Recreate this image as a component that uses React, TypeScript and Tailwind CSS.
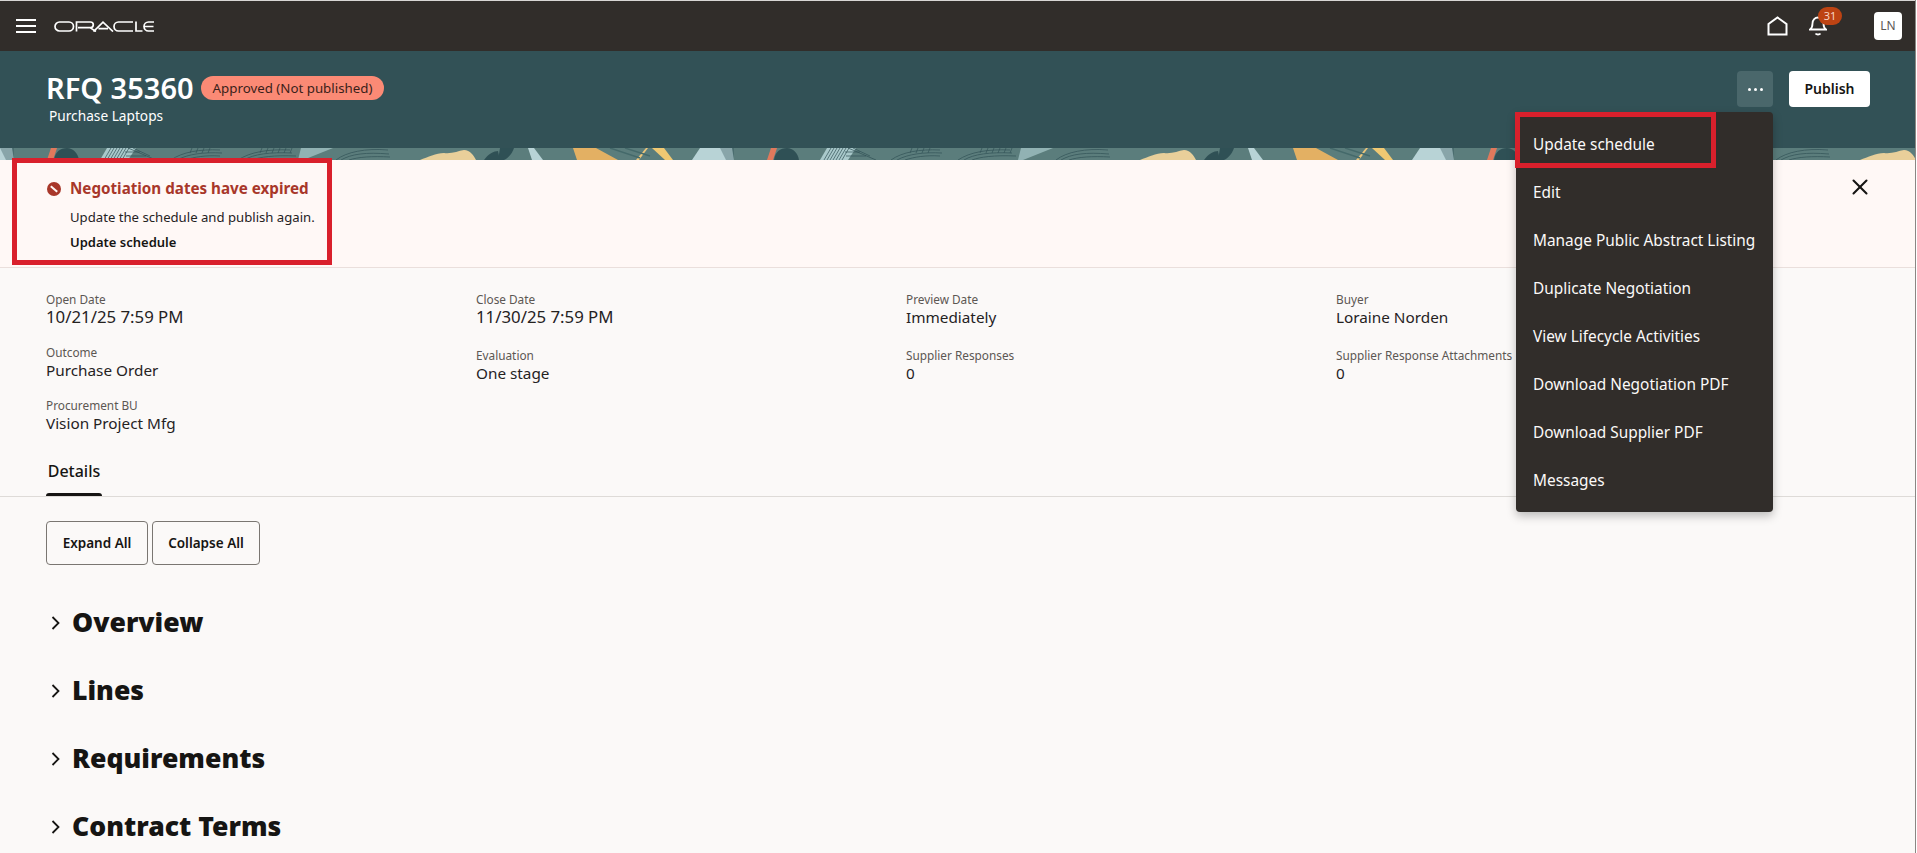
import { X } from "lucide-react";

const menuItems = [
	"Update schedule",
	"Edit",
	"Manage Public Abstract Listing",
	"Duplicate Negotiation",
	"View Lifecycle Activities",
	"Download Negotiation PDF",
	"Download Supplier PDF",
	"Messages",
];

const sections = ["Overview", "Lines", "Requirements", "Contract Terms"];

const Field = ({ label, value, date }: { label: string; value: string; date?: boolean }) => (
	<div className="flex flex-col whitespace-nowrap">
		<span className="text-[11.8px] leading-[15px] text-[#5c5753]">{label}</span>
		<span className={`leading-[20px] text-[#25221f] ${date ? "text-[16.8px]" : "text-[15.3px]"}`}>{value}</span>
	</div>
);

const OracleLogo = () => (
	<svg width="100" height="11" viewBox="0 0 100 11" fill="none" stroke="#fff" strokeWidth="1.7" role="img" aria-label="Oracle">
		<rect x="1" y="1" width="18.5" height="9" rx="4.5" />
		<path d="M22.5 10.5V1H36.5a2.7 2.7 0 0 1 0 5.6H24M36 6.6L42 10.5" />
		<path d="M39.5 10.5L49 1.2L59 10.5M44.5 7.6H54" />
		<path d="M79 1H64.5a4.5 4.5 0 0 0 0 9H79" />
		<path d="M82 0.5V10H88.5" />
		<path d="M100 1H94.5a4.5 4.5 0 0 0 0 9H100M90.5 5.5H99.5" />
	</svg>
);

// 720px wide tile, repeats along the strip under the page header
const PatternStrip = () => (
	<svg className="block w-full h-[12px]" height="12">
		<defs>
			<pattern id="strip" width="720" height="12" patternUnits="userSpaceOnUse">
				<rect width="720" height="12" fill="#5b7d7c" />
				<path d="M0 0H12L14 12H0Z" fill="#b8d3d6" />
				<path d="M0 0H14V12H6Z" fill="#2f5055" opacity="0.35" />
				<path d="M47 12L51 0H57L53 12Z" fill="#e0795c" />
				<path d="M54 12C55 4 60 0 67 0C73 0 78 5 79 12Z" fill="#2f5055" />
				<path d="M100 12L107 0H136L128 12Z" fill="#a9c9cb" />
				<g fill="none" stroke="#2f5055" strokeWidth="0.7">
					<path d="M104 12L111 0M107 12L114 0M110 12L117 0M113 12L120 0M116 12L123 0M119 12L126 0M122 12L129 0" />
					<path d="M128 0L156 12M133 0L150 8M125 4H140M126 8H146" />
					<path d="M171 12C182 4 200 1 220 2M177 12C188 6 204 4 222 5M185 12C194 9 206 7 220 8M192 0L190 5M198 0L196 5M204 0L202 5M210 0L208 5" />
					<path d="M238 12C250 4 268 1 290 2M244 12C254 6 270 4 292 5M252 12C260 9 274 7 296 8" />
					<path d="M262 0L260 5M268 0L266 5M274 0L272 5M280 0L278 5M286 0L284 5M292 0L290 5" />
					<path d="M336 12C346 4 366 0 388 2M341 12C351 6 366 4 389 6M349 12C358 9 372 8 390 9" />
				</g>
				<path d="M301 0H333L303 12H298Z" fill="#a9c9cb" opacity="0.7" />
				<path d="M420 12C428 9 436 5 444 5C452 6 458 3 464 2C470 2 474 8 476 12Z" fill="#e9cf9a" />
				<path d="M484 12C488 6 494 3 498 3L500 12Z" fill="#2f5055" />
				<path d="M500 0H514C512 6 508 10 504 12H498Z" fill="#2f5055" />
				<path d="M528 0H534L543 12H532Z" fill="#b8d3d6" />
				<path d="M573 0H596L618 12H577Z" fill="#e3b063" />
				<path d="M636 12L646 0H648L639 12Z" fill="#eec67a" />
				<path d="M652 0H664L673 12H665Z" fill="#f0c872" />
				<g stroke="#44696a" strokeWidth="1.5">
					<path d="M610 0L640 10M625 0L650 8" />
				</g>
				<path d="M700 0H725L736 12H692Z" fill="#b8d3d6" />
			</pattern>
		</defs>
		<rect width="100%" height="12" fill="url(#strip)" />
	</svg>
);

export default function App() {
	return (
		<div
			className="relative h-[853px] w-full overflow-hidden flex bg-[#fbf9f8]"
			style={{ fontFamily: '"Noto Sans", "Open Sans", sans-serif' }}
		>
			<div className="flex-1 min-w-0 self-start flex flex-col">
				<div className="h-px bg-[#d8d6d4]" />
				<header className="h-[50px] bg-[#312d2a] flex items-center pl-4 pr-[13px]">
					<div className="w-5 flex flex-col gap-[4px]">
						<span className="h-[2px] bg-white" />
						<span className="h-[2px] bg-white" />
						<span className="h-[2px] bg-white" />
					</div>
					<div className="ml-[18px]">
						<OracleLogo />
					</div>
					<div className="ml-auto flex items-center">
						<svg width="21" height="20" viewBox="0 0 21 20" fill="none" stroke="#fff" strokeWidth="2">
							<path d="M1.5 18.5V8L10.5 1.5L19.5 8V18.5Z" />
						</svg>
						<div className="relative ml-[21px] w-[18px] h-[20px]">
							<svg width="18" height="20" viewBox="0 0 18 20" fill="none" stroke="#fff" strokeWidth="1.8">
								<path d="M1 13.5C3 12 3.5 10 3.5 7.5C3.5 4 6 1.5 9 1.5C12 1.5 14.5 4 14.5 7.5C14.5 10 15 12 17 13.5Z" />
								<path d="M6.5 17.5C7.5 18.8 10.5 18.8 11.5 17.5" />
							</svg>
							<span className="absolute left-[9px] top-[-9px] w-6 h-[18px] rounded-full bg-[#bd4313] text-[11px] leading-[18px] text-center text-[#f7d3c4]">
								31
							</span>
						</div>
						<div className="ml-[47px] w-7 h-7 rounded-[4px] bg-white flex items-center justify-center text-[12px] text-[#5c5753]">
							LN
						</div>
					</div>
				</header>

				<section className="h-[97px] bg-[#325156] flex justify-between pl-[46px] pr-[45px] pt-[19px]">
					<div>
						<div className="h-[36px] flex items-center gap-[7px]">
							<h1 className="text-[29px] leading-[36px] font-semibold text-white">RFQ 35360</h1>
							<span className="h-6 px-3 rounded-full bg-[#fb8a75] text-[13.3px] leading-6 text-[#3a1f1a]">
								Approved (Not published)
							</span>
						</div>
						<p className="pl-[3px] text-[13.7px] leading-5 text-white">Purchase Laptops</p>
					</div>
					<div className="flex gap-4 pt-px">
						<button className="w-9 h-9 rounded-[4px] bg-[#4a676b] flex items-center justify-center gap-[3px]">
							<span className="w-[3px] h-[3px] rounded-full bg-white" />
							<span className="w-[3px] h-[3px] rounded-full bg-white" />
							<span className="w-[3px] h-[3px] rounded-full bg-white" />
						</button>
						<button className="w-[81px] h-9 pb-px rounded-[4px] bg-white text-[14px] font-semibold text-[#161513]">
							Publish
						</button>
					</div>
				</section>

				<PatternStrip />

				<section className="relative z-10 h-[108px] bg-[#fff8f6] border-b border-[#eadfdc] flex pl-[47px] pr-[42px] pt-[16px]">
					<svg className="mt-[6px] shrink-0" width="14" height="14" viewBox="0 0 14 14">
						<circle cx="7" cy="7" r="7" fill="#a8372a" />
						<path d="M3.8 4.2L10.2 9.8" stroke="#fff8f6" strokeWidth="2" />
					</svg>
					<div className="ml-[9px] flex flex-col">
						<h2 className="text-[15.2px] leading-6 font-bold text-[#a8372a]">Negotiation dates have expired</h2>
						<p className="mt-[7px] text-[13.15px] leading-5 text-[#25221f]">Update the schedule and publish again.</p>
						<a className="mt-[5px] text-[13px] leading-5 font-semibold text-[#161513]">Update schedule</a>
					</div>
					<X className="ml-auto mt-[-2px]" size={26} color="#161513" strokeWidth={1.9} />
					<div className="absolute left-[12px] top-[-2px] w-[320px] h-[107px] border-[5px] border-[#d9202c]" />
				</section>

				<section className="pl-[46px] pt-6 grid grid-cols-[430px_430px_430px_1fr] items-start">
					<div className="flex flex-col gap-[18px]">
						<Field label="Open Date" value="10/21/25 7:59 PM" date />
						<Field label="Outcome" value="Purchase Order" />
						<Field label="Procurement BU" value="Vision Project Mfg" />
					</div>
					<div className="flex flex-col gap-[21px]">
						<Field label="Close Date" value="11/30/25 7:59 PM" date />
						<Field label="Evaluation" value="One stage" />
					</div>
					<div className="flex flex-col gap-[21px]">
						<Field label="Preview Date" value="Immediately" />
						<Field label="Supplier Responses" value="0" />
					</div>
					<div className="flex flex-col gap-[21px]">
						<Field label="Buyer" value="Loraine Norden" />
						<Field label="Supplier Response Attachments" value="0" />
					</div>
				</section>

				<nav className="mt-[19px] h-[45px] border-b border-[#dedbd8] pl-[46px]">
					<div className="w-[56px] h-[44px] flex flex-col items-center">
						<span className="flex-1 pb-1 flex items-center text-[16px] font-medium text-[#161513]">Details</span>
						<span className="w-full h-[3px] rounded-t-[4px] bg-[#161513]" />
					</div>
				</nav>

				<div className="pl-[46px] pt-6 flex gap-1">
					<button className="w-[102px] h-[44px] rounded-[4px] border border-[#7a7672] text-[13.5px] font-semibold text-[#161513]">
						Expand All
					</button>
					<button className="w-[108px] h-[44px] rounded-[4px] border border-[#7a7672] text-[13.5px] font-semibold text-[#161513]">
						Collapse All
					</button>
				</div>

				<div className="mt-6 pl-[51px] flex flex-col">
					{sections.map((name) => (
						<div key={name} className="h-[68px] flex items-center gap-3">
							<svg width="9" height="14" viewBox="0 0 9 14" fill="none" stroke="#161513" strokeWidth="1.8">
								<path d="M1.5 1L7.5 7L1.5 13" />
							</svg>
							<h3 className="text-[26.6px] font-black text-[#161513]">{name}</h3>
						</div>
					))}
				</div>
			</div>

			<div className="w-[2px] shrink-0 bg-white border-l border-[#8a8784]" />

			<div className="absolute z-20 left-[1516px] top-[112px] w-[257px] py-2 rounded-[4px] bg-[#312d2a] shadow-[0_4px_10px_rgba(0,0,0,0.25)]">
				{menuItems.map((item) => (
					<div key={item} className="h-12 pt-[2px] px-[17px] flex items-center whitespace-nowrap text-[15.4px] text-[#fbf9f8]">
						{item}
					</div>
				))}
				<div className="absolute left-[-1px] top-0 w-[201px] h-[56px] border-[5px] border-[#d9202c]" />
			</div>
		</div>
	);
}
